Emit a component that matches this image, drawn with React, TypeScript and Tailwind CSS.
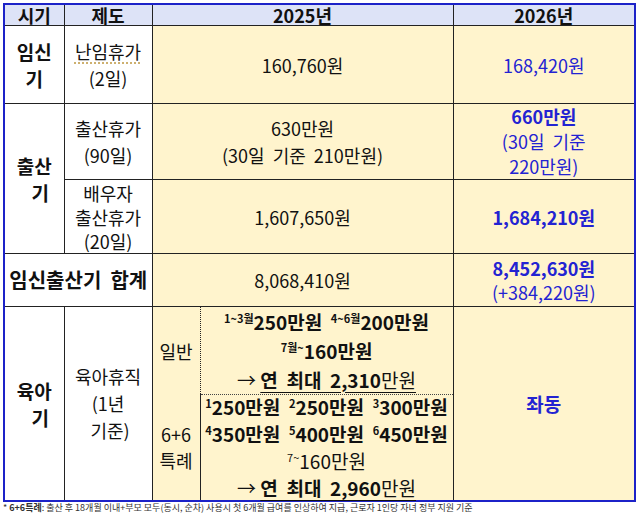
import React from "react";

const F = { fontFamily: '"Noto Sans CJK KR", "Noto Sans", sans-serif' };

const cell = "border border-[#222] text-center align-middle p-0";
const cream = "bg-[#fff4cd]";
const blue = "text-[#2323d2]";

function Sup({ children }: { children: React.ReactNode }) {
  return <span className="text-[11px] relative top-[-7px] font-bold">{children}</span>;
}

export default function App() {
  return (
    <div className="w-[640px] h-[524px] bg-white pl-[3px] pt-[3px] text-[#111]" style={F}>
      <table className="border-collapse border-2 border-[#1c22c8] w-[631px] table-fixed text-[18px] leading-[24px]">
        <colgroup>
          <col className="w-[60px]" />
          <col className="w-[88px]" />
          <col className="w-[48px]" />
          <col className="w-[253px]" />
          <col className="w-[182px]" />
        </colgroup>
        <tbody>
          <tr className="h-[21px] bg-[#dde3f7] font-bold">
            <td className={`${cell} leading-[20px]`}>시기</td>
            <td className={`${cell} leading-[20px]`}>제도</td>
            <td className={`${cell} leading-[20px]`} colSpan={2}>2025년</td>
            <td className={`${cell} leading-[20px]`}>2026년</td>
          </tr>
          <tr className="h-[78px]">
            <td className={`${cell} font-bold text-[19px] leading-[27px]`}>임신<br />기</td>
            <td className={`${cell} leading-[27px]`}>
              <span className="underline decoration-dotted decoration-[#c8a860] underline-offset-4">난임휴가</span>
              <br />(2일)
            </td>
            <td className={`${cell} ${cream}`} colSpan={2}>160,760원</td>
            <td className={`${cell} ${cream} ${blue}`}>168,420원</td>
          </tr>
          <tr className="h-[76px]">
            <td className={`${cell} font-bold text-[19px] leading-[27px]`} rowSpan={2}>출산<br /><span className="pl-[12px]">기</span></td>
            <td className={`${cell} leading-[27px]`}>출산휴가<br />(90일)</td>
            <td className={`${cell} ${cream} leading-[27px]`} colSpan={2}>630만원<br />(30일&nbsp; 기준&nbsp; 210만원)</td>
            <td className={`${cell} ${cream} ${blue} leading-[25px]`}>
              <span className="font-bold">660만원</span><br />(30일&nbsp; 기준<br />220만원)
            </td>
          </tr>
          <tr className="h-[74px]">
            <td className={`${cell} leading-[24px]`}>배우자<br />출산휴가<br />(20일)</td>
            <td className={`${cell} ${cream}`} colSpan={2}>1,607,650원</td>
            <td className={`${cell} ${cream} ${blue} font-bold`}>1,684,210원</td>
          </tr>
          <tr className="h-[53px]">
            <td className={`${cell} font-bold text-[20px]`} colSpan={2}>임신출산기&nbsp; 합계</td>
            <td className={`${cell} ${cream}`} colSpan={2}>8,068,410원</td>
            <td className={`${cell} ${cream} ${blue}`}>
              <span className="font-bold">8,452,630원</span><br />(+384,220원)
            </td>
          </tr>
          <tr className="h-[88px]">
            <td className={`${cell} font-bold text-[19px] leading-[27px]`} rowSpan={2}>육아<br /><span className="pl-[12px]">기</span></td>
            <td className={`${cell} leading-[27px]`} rowSpan={2}>육아휴직<br />(1년<br />&nbsp;기준)</td>
            <td className={`${cream} border-l border-[#222] text-center align-middle p-0`}>일반</td>
            <td className={`${cream} border-l border-r border-[#222] border-b border-b-[#444] border-dotted text-center align-middle p-0 leading-[26px] text-[19px]`}>
              <div className="font-bold"><Sup>1~3월</Sup>250만원&nbsp; <Sup>4~6월</Sup>200만원</div>
              <div className="font-bold"><Sup>7월~</Sup>160만원</div>
              <div>
                → <span className="underline underline-offset-4"><span className="font-bold">연&nbsp; 최대&nbsp; 2,310</span>만원</span>
              </div>
            </td>
            <td className={`${cell} ${cream} ${blue} font-bold text-[19px]`} rowSpan={2}>좌동</td>
          </tr>
          <tr className="h-[97px]">
            <td className={`${cream} border-l border-b border-[#222] text-center align-middle p-0 leading-[26px]`}>6+6<br />특례</td>
            <td className={`${cream} border-l border-r border-b border-[#222] text-center align-middle p-0 leading-[24px] text-[19px]`}>
              <div className="font-bold"><Sup>1</Sup>250만원&nbsp; <Sup>2</Sup>250만원&nbsp; <Sup>3</Sup>300만원</div>
              <div className="font-bold"><Sup>4</Sup>350만원&nbsp; <Sup>5</Sup>400만원&nbsp; <Sup>6</Sup>450만원</div>
              <div><span className="text-[11px] relative top-[-7px]">7~</span>160만원</div>
              <div>
                → <span className="underline underline-offset-4"><span className="font-bold">연&nbsp; 최대&nbsp; 2,960</span>만원</span>
              </div>
            </td>
          </tr>
        </tbody>
      </table>
      <div className="text-[9px] leading-[12px] text-[#333]">
        * <span className="font-bold">6+6특례</span>: 출산 후 18개월 이내+부모 모두(동시, 순차) 사용시 첫 6개월 급여를 인상하여 지급, 근로자 1인당 자녀 정부 지원 기준
      </div>
    </div>
  );
}
